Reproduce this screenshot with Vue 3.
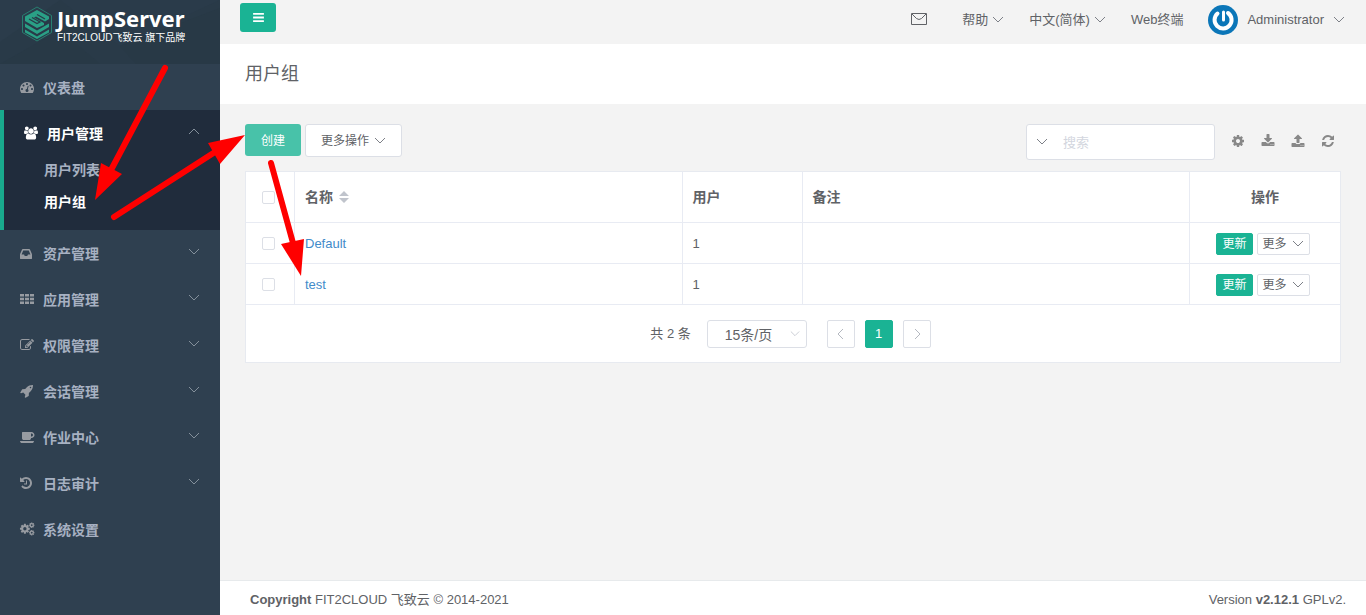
<script setup>
import { ref } from 'vue'

const gear = 'M1152 896q0-106-75-181t-181-75-181 75-75 181 75 181 181 75 181-75 75-181zm512-109v222q0 12-8 23t-20 13l-185 28q-19 54-39 91 35 50 107 138 10 12 10 25t-9 23q-27 37-99 108t-94 71q-12 0-26-9l-138-108q-44 23-91 38-16 136-29 186-7 28-36 28h-222q-14 0-24.500-8.500t-11.500-21.500l-28-184q-49-16-90-37l-141 107q-10 9-25 9-14 0-25-11-126-114-165-168-7-10-7-23 0-12 8-23 15-21 51-66.500t54-70.500q-27-50-41-99l-183-27q-13-2-21-12.500t-8-23.500v-222q0-12 8-23t19-13l186-28q14-46 39-92-40-57-107-138-10-12-10-24 0-10 9-23 26-36 98.500-107.500t94.500-71.500q13 0 26 10l138 107q44-23 91-38 16-136 29-186 7-28 36-28h222q14 0 24.500 8.500t11.500 21.500l28 184q49 16 90 37l142-107q9-9 24-9 13 0 25 10 129 119 165 170 7 8 7 22 0 12-8 23-15 21-51 66.500t-54 70.500q26 50 41 98l183 28q13 2 21 12.500t8 23.500z'

const icons = {
  dashboard: 'M384 1152q0-53-37.500-90.500t-90.500-37.500-90.500 37.500-37.500 90.500 37.500 90.500 90.500 37.500 90.500-37.500 37.500-90.500zm192-448q0-53-37.500-90.500t-90.500-37.500-90.500 37.500-37.500 90.500 37.500 90.500 90.500 37.500 90.500-37.500 37.500-90.500zm428 481l101-382q6-26-7.500-48.500t-38.500-29.500-48 6.500-30 39.500l-101 382q-60 5-107 43.500t-63 98.500q-20 77 20 146t117 89 146-20 89-117q16-60-6-117t-72-91zm660-33q0-53-37.500-90.500t-90.500-37.500-90.500 37.500-37.500 90.500 37.500 90.500 90.500 37.500 90.500-37.500 37.500-90.500zm-640-640q0-53-37.500-90.500t-90.500-37.500-90.500 37.500-37.500 90.500 37.500 90.500 90.500 37.500 90.500-37.500 37.500-90.500zm448 192q0-53-37.500-90.500t-90.500-37.500-90.500 37.500-37.500 90.500 37.500 90.500 90.500 37.500 90.500-37.500 37.500-90.500zm320 448q0 261-141 483-19 29-54 29h-1402q-35 0-54-29-141-221-141-483 0-182 71-348t191-286 286-191 348-71 348 71 286 191 191 286 71 348z',
  inbox: 'M1023 1088h316q-1-3-2.500-8t-2.500-8l-212-496h-708l-212 496q-1 2-2.500 8t-2.500 8h316l95 192h320zm513 30v482q0 26-19 45t-45 19h-1408q-26 0-45-19t-19-45v-482q0-62 25-123l238-552q10-25 36.500-42t52.500-17h832q26 0 52.500 17t36.500 42l238 552q25 61 25 123z',
  grid: 'M0 256h512v330h-512zM640 256h512v330h-512zM1280 256h512v330h-512zM0 730h512v330h-512zM640 730h512v330h-512zM1280 730h512v330h-512zM0 1204h512v330h-512zM640 1204h512v330h-512zM1280 1204h512v330h-512z',
  edit: 'M888 1184l116-116-152-152-116 116v56h96v96h56zm440-720q-16-16-33 1l-350 350q-17 17-1 33t33-1l350-350q17-17 1-33zm80 594v190q0 119-84.500 203.500t-203.500 84.500h-832q-119 0-203.500-84.500t-84.500-203.500v-832q0-119 84.500-203.500t203.500-84.500h832q63 0 117 25 15 7 18 23 3 17-9 29l-49 49q-14 14-32 8-23-6-45-6h-832q-66 0-113 47t-47 113v832q0 66 47 113t113 47h832q66 0 113-47t47-113v-126q0-13 9-22l64-64q15-15 35-7t20 29zm-96-738l288 288-672 672h-288v-288zm444 132l-92 92-288-288 92-92q28-28 68-28t68 28l152 152q28 28 28 68t-28 68z',
  rocket: 'M1440 448q0-40-28-68t-68-28-68 28-28 68 28 68 68 28 68-28 28-68zm224-288q0 249-75.500 430.500t-253.500 360.500q-81 80-195 176l-20 379q-2 16-16 26l-384 224q-7 4-16 4-12 0-23-9l-64-64q-13-14-8-32l85-276-281-281-276 85q-3 1-9 1-14 0-23-9l-64-64q-17-19-5-39l224-384q10-14 26-16l379-20q96-114 176-195 188-187 358-258t431-71q14 0 24 9.500t10 22.500z',
  coffee: 'M1664 640q0-80-56-136t-136-56h-64v384h64q80 0 136-56t56-136zm-1664 768h1792q0 106-75 181t-181 75h-1280q-106 0-181-75t-75-181zm1856-768q0 159-112.500 271.500t-271.500 112.500h-64v32q0 92-66 158t-158 66h-704q-92 0-158-66t-66-158v-736q0-26 19-45t45-19h1152q159 0 271.500 112.500t112.500 271.500z',
  history: 'M1536 896q0 156-61 298t-164 245-245 164-298 61q-172 0-327-72.500t-264-204.500q-7-10-6.500-22.500t8.500-20.500l137-138q10-9 25-9 16 2 23 12 73 95 179 147t225 52q104 0 198.500-40.500t163.500-109.500 109.500-163.500 40.500-198.500-40.500-198.500-109.500-163.500-163.500-109.500-198.500-40.500q-98 0-188 35.500t-160 101.500l137 138q31 30 14 69-17 40-59 40h-448q-26 0-45-19t-19-45v-448q0-42 40-59 39-17 69 14l130 129q107-101 244.500-156.500t284.500-55.500q156 0 298 61t245 164 164 245 61 298zm-640-288v448q0 14-9 23t-23 9h-320q-14 0-23-9t-9-23v-64q0-14 9-23t23-9h224v-352q0-14 9-23t23-9h64q14 0 23 9t9 23z',
}

const menus = [
  { label: '资产管理', icon: 'inbox', open: true },
  { label: '应用管理', icon: 'grid', open: true },
  { label: '权限管理', icon: 'edit', open: true },
  { label: '会话管理', icon: 'rocket', open: true },
  { label: '作业中心', icon: 'coffee', open: true },
  { label: '日志审计', icon: 'history', open: true },
  { label: '系统设置', icon: 'gears', open: false },
]

const tools = [
  { label: '设置', path: gear },
  { label: '下载', path: 'M1344 1344q0-26-19-45t-45-19-45 19-19 45 19 45 45 19 45-19 19-45zm256 0q0-26-19-45t-45-19-45 19-19 45 19 45 45 19 45-19 19-45zm128-224v320q0 40-28 68t-68 28h-1472q-40 0-68-28t-28-68v-320q0-40 28-68t68-28h465l135 136q58 56 136 56t136-56l136-136h464q40 0 68 28t28 68zm-325-569q17 41-14 70l-448 448q-18 19-45 19t-45-19l-448-448q-31-29-14-70 17-39 59-39h256v-448q0-26 19-45t45-19h256q26 0 45 19t19 45v448h256q42 0 59 39z' },
  { label: '上传', path: 'M1344 1472q0-26-19-45t-45-19-45 19-19 45 19 45 45 19 45-19 19-45zm256 0q0-26-19-45t-45-19-45 19-19 45 19 45 45 19 45-19 19-45zm128-224v320q0 40-28 68t-68 28h-1472q-40 0-68-28t-28-68v-320q0-40 28-68t68-28h427q21 56 70.500 92t110.500 36h256q61 0 110.500-36t70.500-92h427q40 0 68 28t28 68zm-325-648q-17 40-59 40h-256v448q0 26-19 45t-45 19h-256q-26 0-45-19t-19-45v-448h-256q-42 0-59-40-17-39 14-69l448-448q18-19 45-19t45 19l448 448q31 30 14 69z' },
  { label: '刷新', path: 'M1639 1056q0 5-1 7-64 268-268 434.500t-478 166.500q-146 0-282.500-55t-243.500-157l-129 129q-19 19-45 19t-45-19-19-45v-448q0-26 19-45t45-19h448q26 0 45 19t19 45-19 45l-137 137q71 66 161 102t187 36q134 0 250-65t186-179q11-17 53-117 8-23 30-23h192q13 0 22.500 9.500t9.500 22.500zm25-800v448q0 26-19 45t-45 19h-448q-26 0-45-19t-19-45 19-45l138-138q-148-137-349-137-134 0-250 65t-186 179q-11 17-53 117-8 23-30 23h-199q-13 0-22.500-9.500t-9.500-22.500v-7q65-268 270-434.500t480-166.500q146 0 284 55.500t245 156.500l130-129q19-19 45-19t45 19 19 45z' },
]

const rows = [
  { name: 'Default', users: 1, note: '' },
  { name: 'test', users: 1, note: '' },
]
const keyword = ref('')
const pageSize = ref('15')
</script>

<template>
  <div class="app">
    <aside class="sidebar">
      <div class="brand">
        <svg class="brand-bg" viewBox="0 0 220 64" preserveAspectRatio="none" aria-hidden="true">
          <path d="M0 0h60L0 42z" fill="#2b3c4b" />
          <path d="M60 0h160L120 46z" fill="#2a3b4a" />
          <path d="M120 46L220 8v56h-84z" fill="#283946" />
          <path d="M0 64l60-34 40 34z" fill="#283946" />
        </svg>
        <svg class="brand-mark" viewBox="0 0 32 36" aria-hidden="true">
          <path d="M16 1l14.500 8.500v17L16 35 1.500 26.500v-17z" fill="none" stroke="#287f70" />
          <path d="M16 4l12 6.500v2.500l-4 2.500-9-5-2 1 10 5.500v2L16 22 4 15v-4.500z" fill="#2aa086" />
          <path d="M8 13l8 4.500 3-1.500-8-4.500M16 8.500l8 4.500" fill="none" stroke="#293a48" stroke-width="1.200" />
          <path d="M4 17.500l12 7 12-7v3.500l-12 7-12-7zM4 23.500l12 7 12-7v3l-12 6.500-12-6.500z" fill="#2aa086" />
        </svg>
        <div class="brand-text">
          <div class="brand-name">JumpServer</div>
          <div class="brand-sub">FIT2CLOUD飞致云 旗下品牌</div>
        </div>
      </div>
      <nav>
        <a href="#" class="item">
          <svg class="ico" viewBox="0 0 1792 1792"><path :d="icons.dashboard" /></svg>
          <span>仪表盘</span>
        </a>
        <div class="group">
          <a href="#" class="item active">
            <svg class="ico users" viewBox="-64 0 1920 1792">
              <path d="M529 896q-162 5-265 128h-134q-82 0-138-40.500t-56-118.500q0-353 124-353 6 0 43.500 21t97.500 42.500 119 21.500q67 0 133-23-5 37-5 66 0 139 81 256zm1071 637q0 120-73 189.500t-194 69.500h-874q-121 0-194-69.500t-73-189.500q0-53 3.500-103.500t14-109 26.500-108.500 43-97.500 62-81 85.500-53.500 111.500-20q10 0 43 21.500t73 48 107 48 135 21.500 135-21.500 107-48 73-48 43-21.500q61 0 111.500 20t85.500 53.500 62 81 43 97.500 26.500 108.500 14 109 3.500 103.500zm-1024-1277q0 106-75 181t-181 75-181-75-75-181 75-181 181-75 181 75 75 181zm704 384q0 159-112.500 271.500t-271.500 112.500-271.500-112.500-112.500-271.500 112.500-271.500 271.500-112.500 271.500 112.500 112.500 271.500zm576 225q0 78-56 118.500t-138 40.500h-134q-103-123-265-128 81-117 81-256 0-29-5-66 66 23 133 23 59 0 119-21.500t97.500-42.500 43.500-21q124 0 124 353zm-128-609q0 106-75 181t-181 75-181-75-75-181 75-181 181-75 181 75 75 181z" />
            </svg>
            <span>用户管理</span>
            <svg class="chev" viewBox="0 0 12 12"><path d="M1 8l5-5 5 5" /></svg>
          </a>
          <a href="#" class="sub">用户列表</a>
          <a href="#" class="sub current">用户组</a>
        </div>
        <a v-for="m in menus" :key="m.label" href="#" class="item">
          <svg v-if="m.icon === 'gears'" class="ico" viewBox="0 0 1792 1792">
            <path :d="gear" transform="translate(-110 130) scale(.82)" />
            <path :d="gear" transform="translate(1090 0) scale(.46)" />
            <path :d="gear" transform="translate(1090 960) scale(.46)" />
          </svg>
          <svg v-else class="ico" viewBox="0 0 1792 1792"><path :d="icons[m.icon]" /></svg>
          <span>{{ m.label }}</span>
          <svg v-if="m.open" class="chev" viewBox="0 0 12 12"><path d="M1 3l5 5 5-5" /></svg>
        </a>
      </nav>
    </aside>

    <div class="main">
      <header class="topbar">
        <button class="burger" aria-label="菜单">
          <svg viewBox="0 0 12 10"><path d="M0 1h12M0 5h12M0 9h12" stroke="#fff" stroke-width="2" /></svg>
        </button>
        <div class="links">
          <button class="plain mail" aria-label="消息">
            <svg viewBox="0 0 16 12"><path d="M.5.500h15v11H.5zM1 1l4.500 4.500q2.500 2 5 0L15 1" /></svg>
          </button>
          <button class="plain">帮助<svg class="chev" viewBox="0 0 12 12"><path d="M1 3l5 5 5-5" /></svg></button>
          <button class="plain">中文(简体)<svg class="chev" viewBox="0 0 12 12"><path d="M1 3l5 5 5-5" /></svg></button>
          <a href="#" class="web">Web终端</a>
          <button class="plain user">
            <svg class="avatar" viewBox="0 0 30 30" aria-hidden="true">
              <circle cx="15" cy="15" r="15" fill="#0b76b8" />
              <path d="M9.500 8.500A8.500 8.500 0 1 0 20 8" fill="none" stroke="#fff" stroke-width="4" stroke-linecap="round" />
              <path d="M15.500 7v8" fill="none" stroke="#fff" stroke-width="3" stroke-linecap="round" />
            </svg>
            <span>Administrator</span>
            <svg class="chev" viewBox="0 0 12 12"><path d="M1 3l5 5 5-5" /></svg>
          </button>
        </div>
      </header>

      <div class="heading"><h1>用户组</h1></div>

      <main class="content">
        <div class="toolbar">
          <button class="btn create">创建</button>
          <button class="btn more">更多操作<svg class="chev" viewBox="0 0 12 12"><path d="M1 3l5 5 5-5" /></svg></button>
          <div class="search">
            <button class="plain" aria-label="搜索条件"><svg class="chev" viewBox="0 0 12 12"><path d="M1 3l5 5 5-5" /></svg></button>
            <input v-model="keyword" type="text" placeholder="搜索" aria-label="搜索">
          </div>
          <div class="tools">
            <button v-for="t in tools" :key="t.label" class="plain" :aria-label="t.label">
              <svg viewBox="0 0 1792 1792"><path :d="t.path" /></svg>
            </button>
          </div>
        </div>

        <section class="card">
          <table>
            <colgroup><col class="c-check"><col><col class="c-users"><col><col class="c-action"></colgroup>
            <thead>
              <tr>
                <th class="center"><input type="checkbox" aria-label="全选"></th>
                <th><span class="sortable">名称<svg class="sort" viewBox="0 0 10 12"><path d="M5 0l5 5H0zM0 7h10l-5 5z" /></svg></span></th>
                <th>用户</th>
                <th>备注</th>
                <th class="center">操作</th>
              </tr>
            </thead>
            <tbody>
              <tr v-for="r in rows" :key="r.name">
                <td class="center"><input type="checkbox" :aria-label="r.name"></td>
                <td><a href="#">{{ r.name }}</a></td>
                <td>{{ r.users }}</td>
                <td>{{ r.note }}</td>
                <td>
                  <div class="actions">
                    <button class="mini primary">更新</button>
                    <button class="mini">更多<svg class="chev" viewBox="0 0 12 12"><path d="M1 3l5 5 5-5" /></svg></button>
                  </div>
                </td>
              </tr>
            </tbody>
          </table>
          <div class="pager">
            <span class="total">共 2 条</span>
            <span class="size">
              <select v-model="pageSize" aria-label="每页条数">
                <option value="15">15条/页</option>
                <option value="30">30条/页</option>
              </select>
              <svg class="chev" viewBox="0 0 12 12"><path d="M1 3l5 5 5-5" /></svg>
            </span>
            <button class="page" aria-label="上一页"><svg viewBox="0 0 12 12"><path d="M8 1L3 6l5 5" /></svg></button>
            <button class="page on">1</button>
            <button class="page" aria-label="下一页"><svg viewBox="0 0 12 12"><path d="M4 1l5 5-5 5" /></svg></button>
          </div>
        </section>
      </main>

      <footer>
        <span><b>Copyright</b> FIT2CLOUD 飞致云 © 2014-2021</span>
        <span>Version <b>v2.12.1</b> GPLv2.</span>
      </footer>
    </div>

    <svg class="arrows" viewBox="0 0 320 290" aria-hidden="true">
      <path d="M165 68L111 170M114 217l101-65M271 163l22 80" />
      <path class="head" d="M95 200l6-37 21 11zM245 135l-37 8 12 21zM301 276l-20-32 23-5z" />
    </svg>
  </div>
</template>

<style>
body {
  margin: 0;
}
</style>

<style scoped>
.app {
  position: relative;
  display: flex;
  min-height: 100vh;
  font: 13px/20px "Liberation Sans", "Noto Sans CJK SC", sans-serif;
  color: #606266;
  background: #f3f3f3;
}
.app * {
  box-sizing: border-box;
}
button,
input,
select {
  font: inherit;
  color: inherit;
  margin: 0;
}
button {
  cursor: pointer;
  padding: 0;
}
a {
  color: inherit;
  text-decoration: none;
}
.chev {
  width: 12px;
  height: 12px;
  fill: none;
  stroke: #7d8087;
  flex: none;
}

/* sidebar */
.sidebar {
  flex: 0 0 220px;
  background: #2f4050;
  color: #a7b1c2;
}
.brand {
  position: relative;
  display: flex;
  height: 64px;
  padding: 6px 0 0 21px;
  gap: 4px;
  background: #293a48;
  overflow: hidden;
}
.brand-bg {
  position: absolute;
  inset: 0;
  width: 100%;
  height: 100%;
}
.brand-mark {
  position: relative;
  width: 32px;
  height: 36px;
}
.brand-text {
  position: relative;
  color: #fff;
  white-space: nowrap;
}
.brand-name {
  font: 700 22px/24px "Noto Sans", sans-serif;
}
.brand-sub {
  font-size: 10px;
  line-height: 16px;
}
.item {
  display: flex;
  align-items: center;
  height: 46px;
  padding: 2px 20px 0;
  font-size: 14px;
  font-weight: 600;
}
.ico {
  width: 14px;
  height: 14px;
  margin: 0 9px 2px 0;
  fill: #979ba1;
  overflow: visible;
}
.item .chev {
  margin: 0 0 4px auto;
  stroke: #84909b;
}
.group {
  padding-bottom: 12px;
  border-left: 4px solid #19aa8d;
  background: #202c3c;
}
.item.active {
  height: 44px;
  padding-top: 4px;
  color: #fff;
}
.item.active .ico {
  fill: #fff;
}
.sub {
  display: block;
  padding-left: 40px;
  line-height: 32px;
  font-size: 14px;
  font-weight: 600;
}
.sub.current {
  color: #fff;
}

/* top bar */
.main {
  flex: 1;
  min-width: 0;
  display: flex;
  flex-direction: column;
}
.topbar {
  display: flex;
  justify-content: space-between;
  height: 44px;
  padding: 0 21px 0 20px;
}
.burger {
  width: 36px;
  height: 29px;
  margin-top: 3px;
  border: 0;
  border-radius: 3px;
  background: #1ab394;
}
.burger svg {
  width: 11px;
  height: 9px;
}
.plain {
  display: flex;
  align-items: center;
  border: 0;
  background: none;
}
.links {
  display: flex;
  align-items: center;
  height: 40px;
  gap: 25px;
}
.links .chev {
  margin-left: 4px;
}
.mail {
  margin-right: 10px;
}
.mail svg {
  width: 16px;
  height: 12px;
  margin-bottom: 3px;
  fill: none;
  stroke: #606266;
}
.avatar {
  width: 30px;
  height: 30px;
  margin-right: 9px;
}
.user .chev {
  margin-left: 9px;
}
.heading {
  padding: 15px 25px;
  background: #fff;
}
h1 {
  margin: 0;
  font-size: 18px;
  line-height: 30px;
  font-weight: 400;
}

/* content */
.content {
  flex: 1;
  padding: 20px 25px;
}
.toolbar {
  display: flex;
  align-items: flex-start;
  height: 47px;
}
.btn {
  display: flex;
  align-items: center;
  height: 32px;
  padding: 1px 16px 0;
  border: 0;
  border-radius: 3px;
  font-size: 12px;
}
.create {
  color: #fff;
  background: #48c2a9;
}
.more {
  height: 33px;
  margin-left: 4px;
  padding: 0 15px;
  gap: 5px;
  border: 1px solid #dcdfe6;
  background: #fff;
}
.search {
  display: flex;
  width: 189px;
  height: 36px;
  margin-left: auto;
  border: 1px solid #dcdfe6;
  border-radius: 3px;
  background: #fff;
}
.search .plain {
  width: 30px;
  justify-content: center;
}
.search input {
  flex: 1;
  min-width: 0;
  padding: 2px 6px 0;
  border: 0;
  outline: 0;
  background: none;
}
.search input::placeholder {
  color: #d3d6de;
}
.tools {
  display: flex;
  gap: 16px;
  padding: 10px 6px 0 16px;
}
.tools svg {
  width: 14px;
  height: 14px;
  fill: #888;
}
.card {
  border: 1px solid #e7eaf0;
  background: #fff;
}
table {
  width: 100%;
  table-layout: fixed;
  border-collapse: separate;
  border-spacing: 0;
}
.c-check {
  width: 49px;
}
.c-users {
  width: 120px;
}
.c-action {
  width: 150px;
}
th,
td {
  height: 41px;
  padding: 1px 10px 0;
  border-right: 1px solid #e8ebf3;
  border-bottom: 1px solid #e8ebf3;
  text-align: left;
}
th {
  height: 51px;
  padding-top: 0;
  font-size: 14px;
}
th:last-child,
td:last-child {
  border-right: 0;
}
th.center,
td.center {
  text-align: center;
}
td a {
  color: #428bca;
}
.sortable {
  display: flex;
  align-items: center;
  gap: 6px;
}
.sort {
  width: 10px;
  height: 12px;
  fill: #c0c4cc;
}
input[type="checkbox"] {
  appearance: none;
  display: block;
  width: 13px;
  height: 13px;
  margin: 0 auto 0 6px;
  border: 1px solid #dcdfe6;
  border-radius: 2px;
  background: #fff;
}
.actions {
  display: flex;
  justify-content: center;
  gap: 4px;
  padding-right: 4px;
}
.mini {
  display: flex;
  align-items: center;
  gap: 5px;
  height: 22px;
  padding: 1px 5px 0;
  border: 1px solid #dcdfe6;
  border-radius: 2px;
  font-size: 12px;
  background: #fff;
}
.mini.primary {
  color: #fff;
  border-color: #1ab394;
  background: #1ab394;
}
.pager {
  display: flex;
  justify-content: center;
  align-items: center;
  padding: 15px 5px 14px 0;
}
.total {
  margin-right: 16px;
}
.size {
  display: flex;
  align-items: center;
  width: 100px;
  height: 28px;
  margin-right: 20px;
  border: 1px solid #dcdfe6;
  border-radius: 3px;
}
.size select {
  appearance: none;
  flex: 1;
  min-width: 0;
  height: 26px;
  padding: 1px 0 0 17px;
  border: 0;
  outline: 0;
  font-size: 14px;
  color: #606266;
  background: none;
}
.size .chev {
  width: 10px;
  height: 10px;
  margin-right: 6px;
  stroke: #c0c4cc;
}
.page {
  display: flex;
  align-items: center;
  justify-content: center;
  width: 28px;
  height: 28px;
  border: 1px solid #dcdfe6;
  border-radius: 2px;
  background: #fff;
}
.page svg {
  width: 12px;
  height: 12px;
  fill: none;
  stroke: #b4b8c0;
}
.page.on {
  margin: 0 10px;
  border-color: #1ab394;
  color: #fff;
  background: #1ab394;
}

footer {
  display: flex;
  justify-content: space-between;
  padding: 9px 20px 5px 30px;
  border-top: 1px solid #e7eaec;
  background: #fff;
}

/* walkthrough arrows drawn over the page */
.arrows {
  position: absolute;
  top: 0;
  left: 0;
  width: 320px;
  height: 290px;
  pointer-events: none;
  fill: none;
  stroke: #f00;
  stroke-width: 6;
  stroke-linecap: round;
}
.arrows .head {
  fill: #f00;
  stroke: none;
}
</style>
